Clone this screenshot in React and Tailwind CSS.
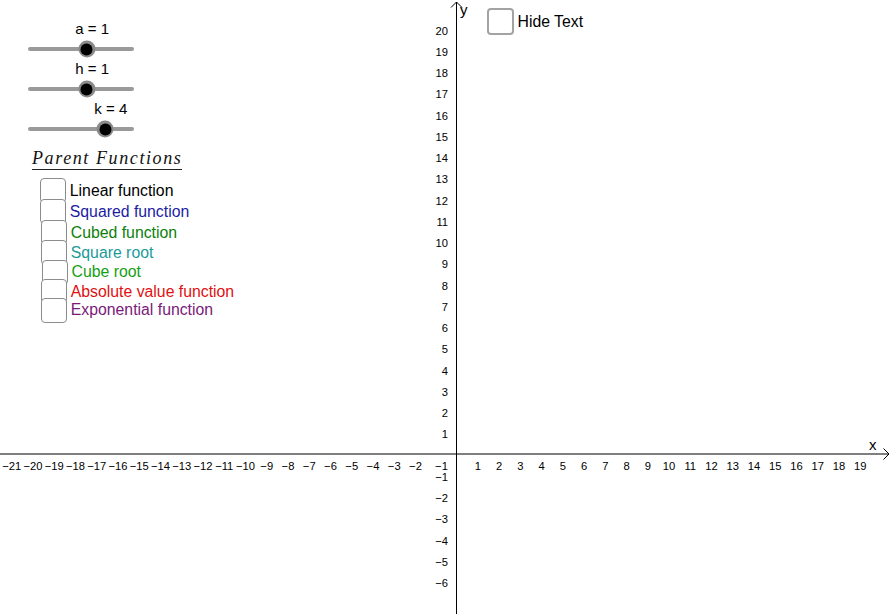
import React from 'react';

const OX = 456.5;
const OY = 454;
const U = 21.25;

const sliders = [
  { label: 'a = 1', knob: 86.7 },
  { label: 'h = 1', knob: 86.7 },
  { label: 'k = 4', knob: 105.3 },
];

const parents = [
  { text: 'Linear function', color: 'text-black', h: 'h-[21.6px]', ml: 'ml-0' },
  { text: 'Squared function', color: 'text-[#1c1ca3]', h: 'h-[21px]', ml: 'ml-0' },
  { text: 'Cubed function', color: 'text-[#0b800b]', h: 'h-[20.2px]', ml: 'ml-[1px]' },
  { text: 'Square root', color: 'text-[#1a9a9a]', h: 'h-[19.8px]', ml: 'ml-[1px]' },
  { text: 'Cube root', color: 'text-[#14a014]', h: 'h-[19.5px]', ml: 'ml-[1.7px]' },
  { text: 'Absolute value function', color: 'text-[#e01010]', h: 'h-[18.9px]', ml: 'ml-[1px]' },
  { text: 'Exponential function', color: 'text-[#7a1a7a]', h: 'h-[18.3px]', ml: 'ml-[1px]' },
];

function range(a, b) {
  const out = [];
  for (let i = a; i <= b; i++) if (i !== 0) out.push(i);
  return out;
}

// graphics view: axes, ticks labels, arrows
function Axes() {
  return (
    <svg className="absolute inset-0" width="890" height="614" viewBox="0 0 890 614">
      <g stroke="#000" strokeWidth="1" fill="none">
        <line x1="0" y1={OY} x2="889" y2={OY} />
        <polyline points={`883.5,448.5 889,${OY} 883.5,459.5`} />
        <line x1={OX} y1="2" x2={OX} y2="614" />
        <polyline points={`451,7.5 ${OX},2 462,7.5`} />
      </g>
      <g fontFamily="'Liberation Sans', Arial, sans-serif" fontSize="11.2" fill="#000">
        {range(-21, 19).map((n) => {
          let x = OX + n * U;
          if (n < 0) x += 1.5;
          if (n === -1) x = 441.5;
          return (
            <text key={'x' + n} x={x} y="470" textAnchor="middle">
              {n < 0 ? '\u2212' + -n : n}
            </text>
          );
        })}
        {range(-6, 20).map((n) => (
          <text key={'y' + n} x="448" y={OY - n * U + 5.5} textAnchor="end">
            {n < 0 ? '\u2212' + -n : n}
          </text>
        ))}
      </g>
      <g fontFamily="'Liberation Sans', Arial, sans-serif" fontSize="15" fill="#000">
        <text x="869" y="450">x</text>
        <text x="460" y="15">y</text>
      </g>
    </svg>
  );
}

function Slider({ label, knob }) {
  const left = knob - 28;
  return (
    <div className="relative h-[40px] w-[106px]">
      <div
        className="absolute top-0 -translate-x-1/2 whitespace-nowrap text-[15px] leading-[17px] text-black"
        style={{ left: left + 5.5 }}
      >
        {label}
      </div>
      <div className="absolute left-0 right-0 top-[27px] h-[4px] rounded-full bg-[#9a9a9a]" />
      <div
        className="absolute top-[29px] h-[17px] w-[17px] -translate-x-1/2 -translate-y-1/2 rounded-full bg-[#8a8a8a] p-[2.5px]"
        style={{ left }}
      >
        <div className="h-full w-full rounded-full bg-black" />
      </div>
    </div>
  );
}

export default function App() {
  return (
    <div className="relative h-[614px] w-[890px] overflow-hidden bg-white font-['Liberation_Sans',Arial,sans-serif]">
      <Axes />

      <div className="absolute left-[28px] top-[20px] flex flex-col items-start">
        {sliders.map((s) => (
          <Slider key={s.label} {...s} />
        ))}

        <span className="ml-[4px] mt-[9px] inline-block border-b border-[#222] pb-[1px] font-['Liberation_Serif',serif] text-[18px] italic leading-[19px] tracking-[1.6px] text-[#111]">
          Parent Functions
        </span>

        <div className="ml-[12px] mt-[9.9px] flex flex-col">
          {parents.map((p) => (
            <div key={p.text} className={`flex items-center ${p.h} ${p.ml}`}>
              <div className="-my-[4px] h-[25px] w-[26px] shrink-0 rounded-[4px] border-[1.5px] border-[#8c8c8c] bg-white" />
              <span className={`ml-[3.8px] whitespace-nowrap text-[15.8px] leading-none ${p.color}`}>
                {p.text}
              </span>
            </div>
          ))}
        </div>
      </div>

      <div className="absolute left-[487px] top-[8px] flex items-center">
        <div className="h-[27px] w-[27px] rounded-[4px] border-2 border-[#a3a3a3] bg-white" />
        <span className="ml-[3.5px] text-[15.8px] leading-none text-black">Hide Text</span>
      </div>
    </div>
  );
}
